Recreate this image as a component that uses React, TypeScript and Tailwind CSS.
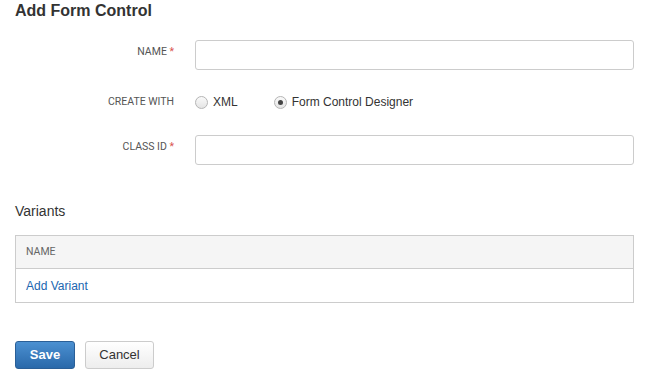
const labelFont = { fontFamily: "Roboto, 'Liberation Sans', sans-serif" };

const FieldLabel = ({
	text,
	required,
	raised,
}: {
	text: string;
	required?: boolean;
	raised?: boolean;
}) => (
	<div
		className={`w-[159px] shrink-0 text-right text-[10.5px] uppercase text-[#555] ${raised ? "-mt-[6px]" : ""}`}
		style={labelFont}
	>
		{text}
		{required && <span className="text-[#d9534f]"> *</span>}
	</div>
);

const Radio = ({ checked, label }: { checked?: boolean; label: string }) => (
	<label className="flex items-center">
		<span className="flex h-[13px] w-[13px] items-center justify-center rounded-full border border-[#b5b5b5] bg-gradient-to-b from-[#fafafa] to-[#e4e4e4]">
			{checked && <span className="h-[5px] w-[5px] rounded-full bg-[#444]" />}
		</span>
		<span className="ml-[5px] text-[12px] text-[#333]">{label}</span>
	</label>
);

export default function App() {
	return (
		<div
			className="min-h-[381px] w-[648px] bg-white pl-[15px] pr-[14px] text-[#333]"
			style={{ fontFamily: "'Liberation Sans', Arial, sans-serif" }}
		>
			<h1 className="text-[16px] font-bold leading-[22px] text-[#333]">
				Add Form Control
			</h1>

			<div className="mt-[18px] flex items-center">
				<FieldLabel text="Name" required raised />
				<input
					type="text"
					className="ml-[21px] h-[30px] flex-1 rounded-[3px] border border-[#ccc] px-2 text-[12px] outline-none"
				/>
			</div>

			<div className="mt-[22px] flex h-[20px] items-center">
				<FieldLabel text="Create With" />
				<div className="ml-[21px] flex items-center gap-[36px]">
					<Radio label="XML" />
					<Radio checked label="Form Control Designer" />
				</div>
			</div>

			<div className="mt-[23px] flex items-center">
				<FieldLabel text="Class ID" required raised />
				<input
					type="text"
					className="ml-[21px] h-[30px] flex-1 rounded-[3px] border border-[#ccc] px-2 text-[12px] outline-none"
				/>
			</div>

			<h2 className="mt-[36px] text-[14px] leading-[20px] text-[#333]">Variants</h2>

			<div className="mt-[14px] border border-[#ccc]">
				<div
					className="flex h-[33px] items-center border-b border-[#ccc] bg-[#f5f5f5] px-[10px] text-[10.5px] uppercase text-[#666]"
					style={labelFont}
				>
					Name
				</div>
				<div className="flex h-[33px] items-center px-[10px]">
					<a href="#" className="text-[12px] text-[#2066b0]">
						Add Variant
					</a>
				</div>
			</div>

			<div className="mt-[38px] flex gap-[10px]">
				<button className="h-[28px] w-[60px] rounded-[3px] border border-[#2a5f97] bg-gradient-to-b from-[#4b90d1] to-[#2a69aa] text-[13px] font-bold text-white">
					Save
				</button>
				<button className="h-[28px] w-[69px] rounded-[3px] border border-[#ccc] bg-gradient-to-b from-white to-[#ededed] text-[13px] text-[#333]">
					Cancel
				</button>
			</div>
		</div>
	);
}
